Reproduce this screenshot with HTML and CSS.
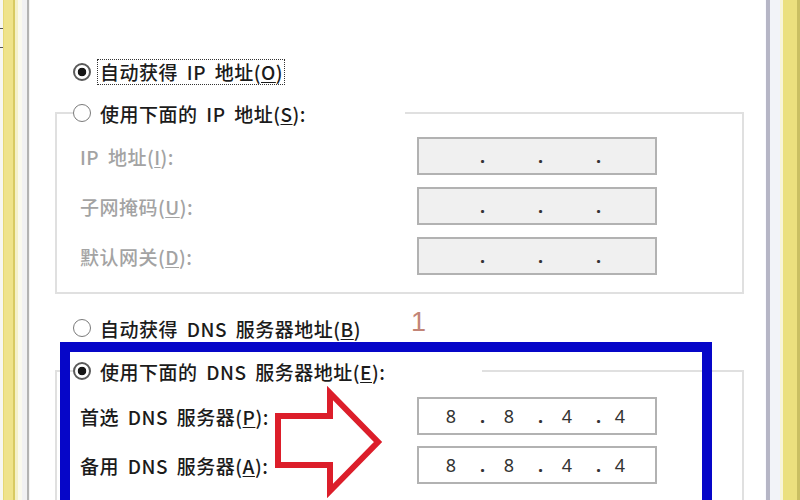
FILE: index.html
```html
<!DOCTYPE html>
<html lang="zh-CN">
<head>
<meta charset="utf-8">
<title>Internet 协议版本 4 (TCP/IPv4) 属性</title>
<link rel="stylesheet" href="styles.css">
</head>
<body>
<div class="screen">
  <div class="chrome-left"></div>
  <main class="panel">
    <div class="radio-row first">
      <span class="radio checked"></span>
      <span class="focus">自动获得 IP 地址(<u>O</u>)</span>
    </div>

    <fieldset class="group ip">
      <legend class="legend ip-legend"><span class="radio"></span><span>使用下面的 IP 地址(<u>S</u>):</span></legend>
      <div class="field-row">
        <span class="label disabled">IP 地址(<u>I</u>):</span>
        <div class="ipbox off"><span class="oct"></span><span class="dot">.</span><span class="oct"></span><span class="dot">.</span><span class="oct"></span><span class="dot">.</span><span class="oct last"></span></div>
      </div>
      <div class="field-row">
        <span class="label disabled">子网掩码(<u>U</u>):</span>
        <div class="ipbox off"><span class="oct"></span><span class="dot">.</span><span class="oct"></span><span class="dot">.</span><span class="oct"></span><span class="dot">.</span><span class="oct last"></span></div>
      </div>
      <div class="field-row">
        <span class="label disabled">默认网关(<u>D</u>):</span>
        <div class="ipbox off"><span class="oct"></span><span class="dot">.</span><span class="oct"></span><span class="dot">.</span><span class="oct"></span><span class="dot">.</span><span class="oct last"></span></div>
      </div>
    </fieldset>

    <div class="radio-row dns-auto">
      <span class="radio"></span>
      <span>自动获得 DNS 服务器地址(<u>B</u>)</span>
    </div>

    <fieldset class="group dns">
      <legend class="legend dns-legend"><span class="radio checked"></span><span>使用下面的 DNS 服务器地址(<u>E</u>):</span></legend>
      <div class="field-row">
        <span class="label">首选 DNS 服务器(<u>P</u>):</span>
        <div class="ipbox"><span class="oct">8</span><span class="dot">.</span><span class="oct">8</span><span class="dot">.</span><span class="oct">4</span><span class="dot">.</span><span class="oct last">4</span></div>
      </div>
      <div class="field-row">
        <span class="label">备用 DNS 服务器(<u>A</u>):</span>
        <div class="ipbox"><span class="oct">8</span><span class="dot">.</span><span class="oct">8</span><span class="dot">.</span><span class="oct">4</span><span class="dot">.</span><span class="oct last">4</span></div>
      </div>
    </fieldset>

    <div class="annot-num">1</div>
    <div class="highlight"></div>
    <svg class="arrow" width="120" height="115" viewBox="0 0 120 115">
      <polygon points="8,31 60,31 60,8 108,57 60,106 60,80 8,80" fill="#ffffff" stroke="#dc1e2a" stroke-width="6" stroke-linejoin="miter"/>
    </svg>
  </main>
  <div class="chrome-right"></div>
</div>
</body>
</html>
```

FILE: styles.css
```css
* { box-sizing: border-box; }
html, body { margin: 0; padding: 0; }
body {
  width: 800px;
  height: 500px;
  overflow: hidden;
  background: #ffffff;
  font-family: "Noto Sans CJK SC", "Noto Sans", sans-serif;
  font-size: 19px;
  font-weight: 500;
  letter-spacing: 0.5px;
  word-spacing: 4px;
  color: #1b1b1b;
}
u { text-decoration: underline; text-underline-offset: 2px; text-decoration-thickness: 1px; }

.screen { display: flex; width: 800px; height: 500px; }

.chrome-left {
  width: 30px;
  flex: none;
  background:
    linear-gradient(#555, #555) 0 28px / 3px 1px no-repeat,
    linear-gradient(#555, #555) 0 47px / 3px 1px no-repeat,
    linear-gradient(to right,
      #f7f7f0 0 3px,
      #e6d873 3px 4px,
      #efe38a 4px 13px,
      #d8ca62 13px 15px,
      #f4f0c8 15px 18px,
      #faf9ee 18px 22px,
      #f1f1f3 22px 27px,
      #b3b3b3 27px 29px,
      #f4f4f4 29px 30px);
}
.chrome-right {
  width: 35px;
  flex: none;
  background: linear-gradient(to right,
    #fafaff 0 1px,
    #b6b6c6 1px 5px,
    #f2f3f8 5px 15px,
    #f8f5d8 15px 18px,
    #ebe07e 18px 32px,
    #c9bf62 32px 35px);
}

.panel {
  position: relative;
  width: 735px;
  flex: none;
  padding-top: 57px;
  background: #ffffff;
}

.radio-row {
  display: flex;
  align-items: center;
  height: 30px;
  margin-left: 43px;
  white-space: nowrap;
}
.radio-row.dns-auto { margin-top: 19px; }

.radio {
  flex: none;
  width: 18px;
  height: 18px;
  border-radius: 50%;
  border: 1.5px solid #7a7a7a;
  background: #ffffff;
  margin-right: 9px;
}
.radio.checked {
  border: 2px solid #5a5a5a;
  background: radial-gradient(circle, #161616 0 4px, #ffffff 4.6px);
}
.first .radio { margin-right: 6px; }

.focus {
  display: inline-block;
  line-height: 22px;
  padding: 1px 1px 1px 2px;
  border: 1px dotted #333;
}

.group {
  margin: 11px 0 0 25px;
  width: 689px;
  min-width: 0;
  padding: 9px 0 17px 0;
  border: 2px solid #e0e0e0;
}
.group.dns {
  margin-top: 13px;
  padding: 11px 0 30px 0;
}

.legend {
  display: flex;
  align-items: center;
  height: 30px;
  padding: 0;
  margin-left: 16px;
  background: #ffffff;
  white-space: nowrap;
}
.ip-legend { width: 332px; }
.dns-legend { width: 409px; }

.field-row {
  display: flex;
  align-items: center;
  height: 38px;
  padding-left: 23px;
}
.field-row + .field-row { margin-top: 12px; }
.dns .field-row + .field-row { margin-top: 11px; }

.label {
  width: 337px;
  flex: none;
  white-space: nowrap;
}
.label.disabled { color: #a3a3a3; }

.ipbox {
  width: 240px;
  height: 38px;
  flex: none;
  display: flex;
  align-items: center;
  padding-left: 7px;
  border: 2px solid #b2b2b2;
  background: #ffffff;
  font-family: "Noto Sans", "DejaVu Sans", sans-serif;
  font-size: 18px;
  font-weight: 400;
  letter-spacing: 0;
  line-height: 34px;
  color: #333;
}
.ipbox.off { background: #f0f0f0; }
.oct { width: 50px; text-align: center; }
.oct.last { width: 40px; }
.dot { width: 8px; text-align: center; padding-left: 4px; font-weight: bold; color: #333; }

.annot-num {
  position: absolute;
  left: 381px;
  top: 302px;
  font-family: "Liberation Sans", sans-serif;
  font-size: 27px;
  font-weight: 400;
  line-height: 40px;
  color: #c28476;
}
.highlight {
  position: absolute;
  left: 30px;
  top: 342px;
  width: 652px;
  height: 200px;
  border: 10px solid #0606c8;
}
.arrow {
  position: absolute;
  left: 240px;
  top: 385px;
}
```
